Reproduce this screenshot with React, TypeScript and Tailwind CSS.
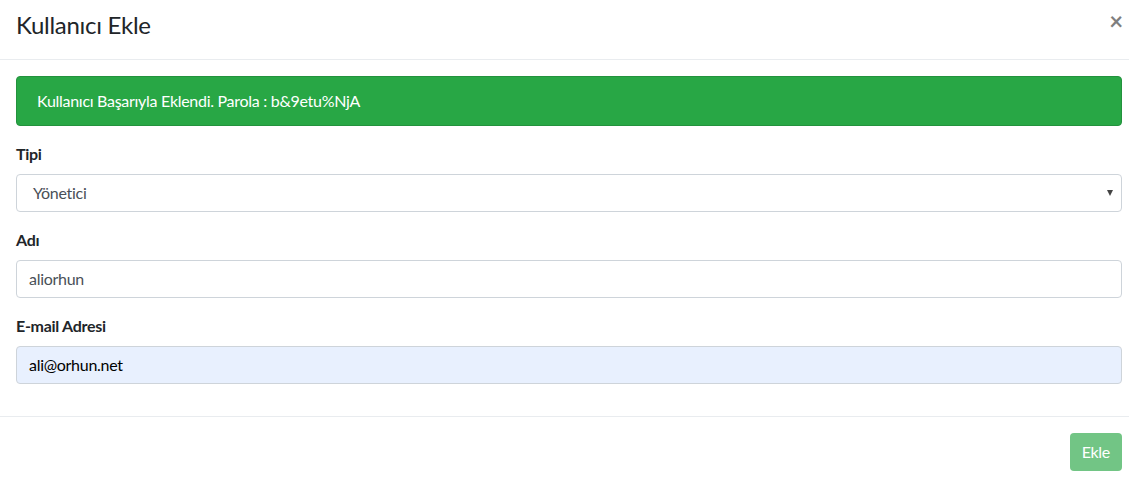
import React from 'react';

const font = { fontFamily: 'Lato, "Noto Sans", sans-serif' };

const Label: React.FC<{ children: React.ReactNode }> = ({ children }) => (
  <label className="block mb-2 text-base leading-6 font-bold text-[#212529]">{children}</label>
);

export default function App() {
  return (
    <div className="w-[1129px] h-[483px] bg-white overflow-hidden text-[#212529] tracking-[-0.018em]" style={font}>
      {/* header */}
      <div className="flex items-start justify-between pl-4 pr-[7px] pt-[10px] border-b border-[#e9ecef] h-[60px]">
        <h4 className="text-2xl leading-[29px] font-normal text-[#212529]">Kullanıcı Ekle</h4>
        <button className="text-2xl leading-none font-bold text-black opacity-50 -mt-[1px] -mr-[1px]">×</button>
      </div>

      {/* body */}
      <div className="pl-4 pr-[7px] pt-4 pb-4">
        <div className="h-[50px] flex items-center px-5 rounded bg-[#28a745] border border-[#23923d] text-white text-base mb-4">
          Kullanıcı Başarıyla Eklendi. Parola : b&amp;9etu%NjA
        </div>

        <div className="mb-4">
          <Label>Tipi</Label>
          <div className="relative h-[38px] flex items-center pl-4 pr-3 border border-[#ced4da] rounded text-base text-[#495057]">
            Yönetici
            <span className="absolute right-[8px] top-[15px] w-0 h-0 border-l-[3.5px] border-r-[3.5px] border-t-[6px] border-l-transparent border-r-transparent border-t-[#444]" />
          </div>
        </div>

        <div className="mb-4">
          <Label>Adı</Label>
          <div className="h-[38px] flex items-center px-3 border border-[#ced4da] rounded text-base text-[#495057]">
            aliorhun
          </div>
        </div>

        <div className="mb-4">
          <Label>E-mail Adresi</Label>
          <div className="h-[38px] flex items-center px-3 border border-[#ced4da] rounded bg-[#e8f0fe] text-base text-black">
            ali@orhun.net
          </div>
        </div>
      </div>

      {/* footer */}
      <div className="flex justify-end border-t border-[#e9ecef] pl-4 pr-[7px] pt-4">
        <button className="h-[38px] px-3 rounded bg-[#28a745] opacity-65 text-white text-base">Ekle</button>
      </div>
    </div>
  );
}
